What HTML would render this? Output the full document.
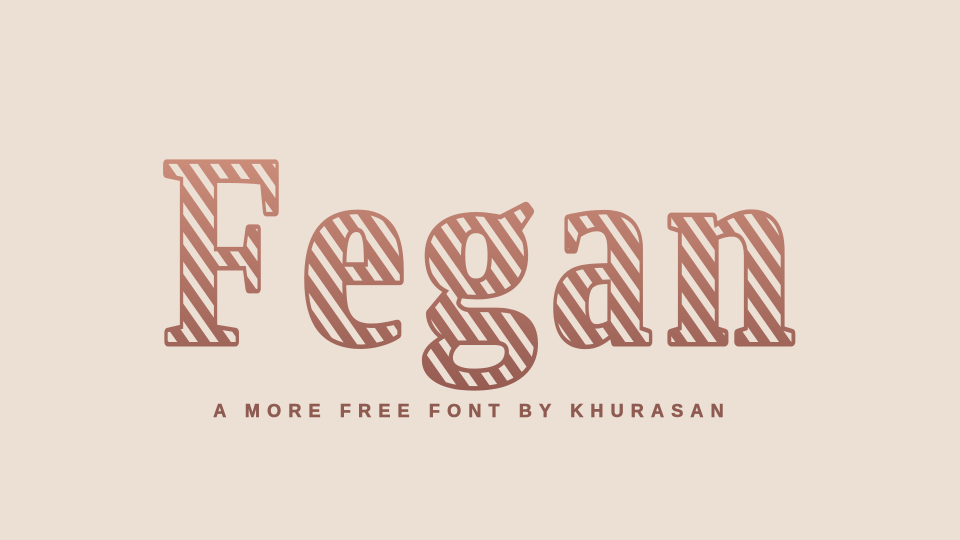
<!DOCTYPE html>
<html><head><meta charset="utf-8"><style>
html,body{margin:0;padding:0;background:#ecdfd4;width:960px;height:540px;overflow:hidden}
</style></head><body>
<svg width="960" height="540" viewBox="0 0 960 540" xmlns="http://www.w3.org/2000/svg">
<defs>
<linearGradient id="g" x1="0" y1="150" x2="0" y2="390" gradientUnits="userSpaceOnUse">
<stop offset="0" stop-color="#cd8e7b"/><stop offset="1" stop-color="#965c52"/>
</linearGradient>
<pattern id="p" width="17" height="17" patternUnits="userSpaceOnUse" patternTransform="rotate(55)">
<rect x="0" y="0" width="17" height="7" fill="#ecdfd4"/>
</pattern>
<g id="t" font-family="Liberation Serif, serif" font-weight="bold" font-size="272">
<text x="163" y="342" textLength="122" lengthAdjust="spacingAndGlyphs">F</text>
<text x="300" y="342" textLength="106" lengthAdjust="spacingAndGlyphs">e</text>
<text x="420" y="332" font-size="245" textLength="116" lengthAdjust="spacingAndGlyphs">g</text>
<text x="550" y="342" textLength="102" lengthAdjust="spacingAndGlyphs">a</text>
<text x="665" y="342" textLength="130" lengthAdjust="spacingAndGlyphs">n</text>
</g>
</defs>
<use href="#t" fill="url(#g)" stroke="url(#g)" stroke-width="3"/>
<use href="#t" fill="url(#p)" stroke="url(#g)" stroke-width="9" stroke-linejoin="round" style="paint-order:stroke"/>
<text x="472" y="417" text-anchor="middle" font-family="Liberation Sans, sans-serif" font-weight="bold" font-size="18" letter-spacing="7.2" fill="#8e5b51" stroke="#8e5b51" stroke-width="0.6">A MORE FREE FONT BY KHURASAN</text>
</svg>
</body></html>
